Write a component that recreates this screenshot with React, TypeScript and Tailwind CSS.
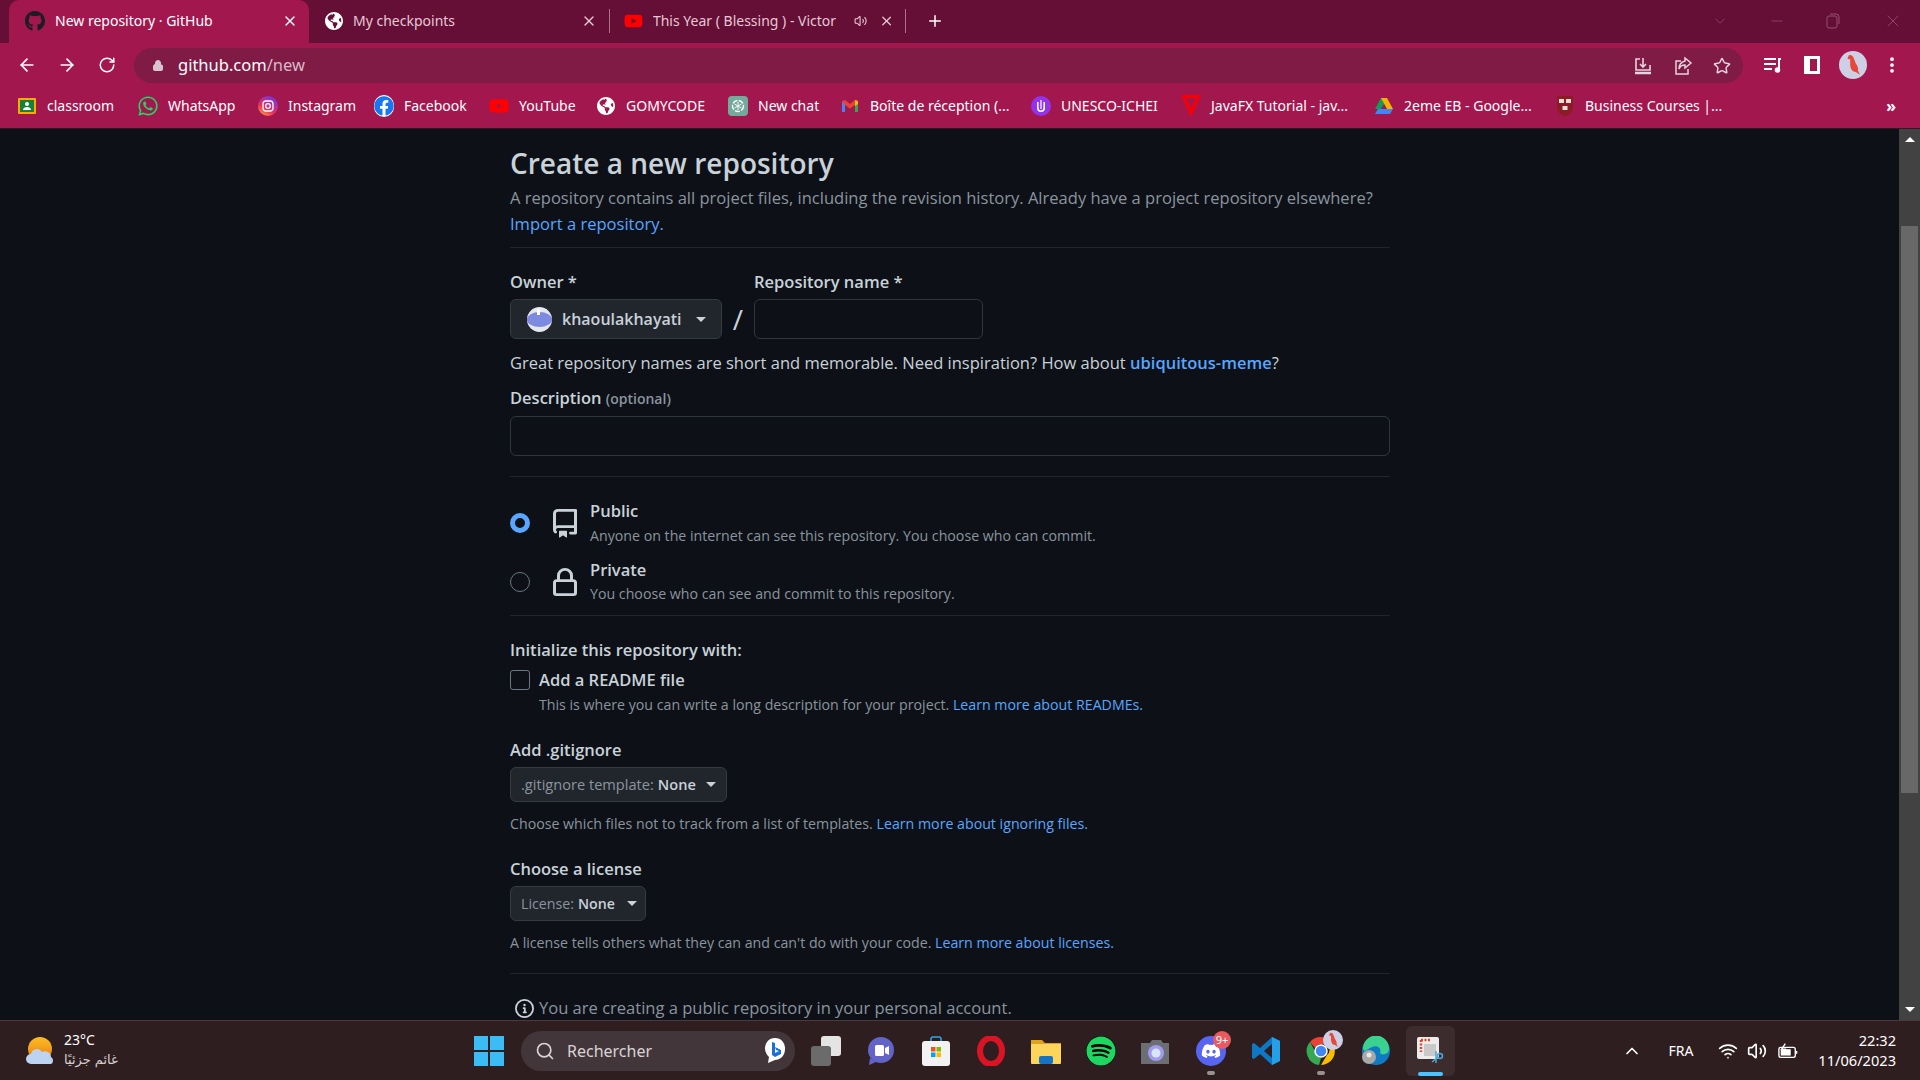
import { ArrowLeft, ArrowRight, RotateCw, Lock, Star, X, Plus, ChevronDown, Minus, MoreVertical, Search, ChevronUp, Volume2, Wifi } from "lucide-react";
import { FaGithub, FaWhatsapp, FaFacebook, FaYoutube, FaGlobeAmericas, FaDiscord, FaSpotify } from "react-icons/fa";

const bodyFont = "font-['Open_Sans','Noto_Sans',sans-serif]";

const Caret = ({ className = "" }: { className?: string }) => (
  <span className={`w-0 h-0 border-x-[5px] border-x-transparent border-t-[5px] border-t-[#c9d1d9] ${className}`} />
);

const Divider = ({ className = "" }: { className?: string }) => <div className={`h-px bg-[#21262d] ${className}`} />;

const Link = ({ children }: { children: React.ReactNode }) => <a className="text-[#58a6ff]">{children}</a>;

function RepoIcon() {
  return (
    <svg viewBox="2 0 12 16" preserveAspectRatio="none" fill="currentColor" className="w-6 h-[29px] ml-[23px] text-[#c9d1d9]">
      <path d="M2 2.5A2.5 2.5 0 0 1 4.5 0h8.75a.75.75 0 0 1 .75.75v12.5a.75.75 0 0 1-.75.75h-2.5a.75.75 0 0 1 0-1.5h1.75v-2h-8a1 1 0 0 0-.714 1.7.75.75 0 1 1-1.072 1.05A2.495 2.495 0 0 1 2 11.5Zm10.5-1h-8a1 1 0 0 0-1 1v6.708A2.486 2.486 0 0 1 4.5 9h8ZM5 12.25a.25.25 0 0 1 .25-.25h3.5a.25.25 0 0 1 .25.25v3.25a.25.25 0 0 1-.4.2l-1.45-1.087a.249.249 0 0 0-.3 0L5.4 15.7a.25.25 0 0 1-.4-.2Z" />
    </svg>
  );
}

function LockIcon() {
  return (
    <svg viewBox="2 0 12 15" preserveAspectRatio="none" fill="currentColor" className="w-6 h-[28px] ml-[23px] text-[#c9d1d9]">
      <path d="M4 4a4 4 0 0 1 8 0v2h.25c.966 0 1.75.784 1.75 1.75v5.5A1.75 1.75 0 0 1 12.25 15h-8.5A1.75 1.75 0 0 1 2 13.25v-5.5C2 6.784 2.784 6 3.75 6H4Zm8.25 3.5h-8.5a.25.25 0 0 0-.25.25v5.5c0 .138.112.25.25.25h8.5a.25.25 0 0 0 .25-.25v-5.5a.25.25 0 0 0-.25-.25ZM10.5 6V4a2.5 2.5 0 1 0-5 0v2Z" />
    </svg>
  );
}

function InfoIcon() {
  return (
    <svg viewBox="0 0 16 16" fill="currentColor" className="w-[19px] h-[19px] mr-[5px] text-[#c9d1d9]">
      <path d="M0 8a8 8 0 1 1 16 0A8 8 0 0 1 0 8Zm8-6.5a6.5 6.5 0 1 0 0 13 6.5 6.5 0 0 0 0-13ZM6.5 7.75A.75.75 0 0 1 7.25 7h1a.75.75 0 0 1 .75.75v2.75h.25a.75.75 0 0 1 0 1.5h-2a.75.75 0 0 1 0-1.5h.25v-2h-.25a.75.75 0 0 1-.75-.75ZM8 6a1 1 0 1 1 0-2 1 1 0 0 1 0 2Z" />
    </svg>
  );
}

function Bird() {
  return (
    <svg viewBox="0 0 20 20" className="w-full h-full">
      <circle cx="10" cy="10" r="10" fill="#cdd0e4" />
      <path d="M7 3c1.500-.5 3 .5 3.500 2l1.500 4c1.500 2 2 4 1.500 5l1.500 3-3-2c-2 0-4-2-4-5L8 6 6 5.500z" fill="#e8483a" />
    </svg>
  );
}

function Classroom() {
  return (
    <svg viewBox="0 0 20 20" className="w-5 h-5">
      <rect x="1" y="2" width="18" height="16" rx="1" fill="#f9ab00" />
      <rect x="3" y="4" width="14" height="12" fill="#188038" />
      <circle cx="10" cy="8" r="2" fill="#fff" />
      <path d="M6 14c0-2 2-3 4-3s4 1 4 3z" fill="#fff" />
    </svg>
  );
}

function Instagram() {
  return (
    <svg viewBox="0 0 20 20" className="w-5 h-5">
      <defs>
        <linearGradient id="ig" x1="0" y1="1" x2="0.6" y2="0">
          <stop offset="0" stopColor="#fdb73b" />
          <stop offset="0.45" stopColor="#e8305d" />
          <stop offset="1" stopColor="#7b35d6" />
        </linearGradient>
      </defs>
      <circle cx="10" cy="10" r="10" fill="url(#ig)" />
      <rect x="5" y="5" width="10" height="10" rx="3" fill="none" stroke="#fff" strokeWidth="1.3" />
      <circle cx="10" cy="10" r="2.3" fill="none" stroke="#fff" strokeWidth="1.3" />
    </svg>
  );
}

function OpenAiIcon() {
  return (
    <svg viewBox="0 0 20 20" className="w-5 h-5">
      <rect width="20" height="20" rx="4" fill="#74aa9c" />
      <circle cx="10" cy="10" r="5.5" fill="none" stroke="#fff" strokeWidth="1.4" strokeDasharray="5 1.5" />
      <path d="M10 6v8M6.5 8l7 4M13.5 8l-7 4" stroke="#fff" strokeWidth="0.9" />
    </svg>
  );
}

function Gmail() {
  return (
    <svg viewBox="0 0 20 20" className="w-5 h-5">
      <path d="M2 5v11h3V8z" fill="#4285f4" />
      <path d="M18 5v11h-3V8z" fill="#34a853" />
      <path d="M2 5l3-1 5 4 5-4 3 1-3 4-5 3.5L5 9z" fill="#ea4335" />
      <path d="M15 4l3 1v3l-3 2z" fill="#fbbc04" />
    </svg>
  );
}

function Unesco() {
  return (
    <svg viewBox="0 0 20 20" className="w-5 h-5">
      <circle cx="10" cy="10" r="10" fill="#9333ea" />
      <path d="M6.8 6v6a3.2 3.2 0 0 0 6.4 0V6" fill="none" stroke="#fff" strokeWidth="1.6" />
      <path d="M10 4v9" stroke="#fff" strokeWidth="1.2" />
    </svg>
  );
}

function JavaFx() {
  return (
    <svg viewBox="0 0 20 22" className="w-5 h-[22px]">
      <path d="M0 0h20L10 22z" fill="#f40009" />
      <path d="M5 3h10l-5 10z" fill="#a3174f" />
    </svg>
  );
}

function Drive() {
  return (
    <svg viewBox="0 0 20 20" className="w-5 h-5">
      <path d="M7 2h6l-3 6-3 5H1z" fill="#0f9d58" />
      <path d="M13 2l6 11h-6L7 2z" fill="#f4b400" />
      <path d="M4 13h15l-3 5H1z" fill="#4285f4" />
    </svg>
  );
}

function Harvard() {
  return (
    <svg viewBox="0 0 20 22" className="w-5 h-[22px]">
      <path d="M2 1h16v11c0 5-4 8-8 9.500C6 20 2 17 2 12z" fill="#8c1c24" />
      <rect x="4" y="4" width="5" height="4" fill="#e8e0d8" />
      <rect x="11" y="4" width="5" height="4" fill="#e8e0d8" />
      <rect x="7.500" y="11" width="5" height="4" fill="#e8e0d8" />
    </svg>
  );
}

const bookmarks = [
  { label: "classroom", icon: <Classroom />, width: "w-[138px] pl-[17px]" },
  { label: "WhatsApp", icon: <FaWhatsapp className="w-5 h-[22px] text-[#25d366]" />, width: "w-[120px]" },
  { label: "Instagram", icon: <Instagram />, width: "w-[116px]" },
  { label: "Facebook", icon: <FaFacebook className="w-5 h-[22px] text-[#1877f2] bg-white rounded-full" />, width: "w-[115px]" },
  { label: "YouTube", icon: <FaYoutube className="w-5 h-5 text-[#f00]" />, width: "w-[107px]" },
  { label: "GOMYCODE", icon: <FaGlobeAmericas className="w-[18px] h-5 text-white" />, width: "w-[132px]" },
  { label: "New chat", icon: <OpenAiIcon />, width: "w-[112px]" },
  { label: "Boîte de réception (...", icon: <Gmail />, width: "w-[191px]" },
  { label: "UNESCO-ICHEI", icon: <Unesco />, width: "w-[150px]" },
  { label: "JavaFX Tutorial - jav...", icon: <JavaFx />, width: "w-[193px]" },
  { label: "2eme EB - Google...", icon: <Drive />, width: "w-[181px]" },
  { label: "Business Courses |...", icon: <Harvard />, width: "w-[170px]" },
];

function TabStrip() {
  return (
    <div className="h-[43px] bg-[#650e36] flex pl-[9px] text-[14px] text-white shrink-0">
      <div className="w-[300px] bg-[#a3174f] rounded-t-[10px] flex items-center pl-4 pr-2 pb-[2px]">
        <FaGithub className="w-5 h-[22px] text-[#1c1c24]" />
        <span className="ml-2.5 flex-1">New repository · GitHub</span>
        <X className="w-4 h-4 mr-[3px]" />
      </div>
      <div className="w-[300px] flex items-center pl-4 pr-3 pb-[2px] text-[#e6c8d4]">
        <FaGlobeAmericas className="w-[18px] h-5 text-white" />
        <span className="ml-2.5 flex-1">My checkpoints</span>
        <X className="w-4 h-4" />
      </div>
      <div className="w-[309px] flex items-center pl-[14px] pr-3 pb-[2px] text-[#e6c8d4]">
        <div className="w-px h-6 bg-[#a9718a] -ml-[14px] mr-[14px]" />
        <FaYoutube className="w-5 h-5 text-[#f00]" />
        <span className="ml-2.5 w-[197px] overflow-hidden whitespace-nowrap">This Year ( Blessing ) - Victor</span>
        <Volume2 className="w-[14px] h-[14px] ml-[14px]" />
        <X className="w-4 h-4 ml-[12px]" />
        <div className="w-px h-6 bg-[#a9718a] ml-[11px]" />
      </div>
      <Plus className="w-[18px] h-[18px] self-center ml-[8px] mb-[2px]" />
      <div className="flex-1 flex items-center justify-end pb-[2px] text-[#93506f]">
        <ChevronDown className="w-[18px] h-[18px] mr-[39px]" strokeWidth={1} />
        <Minus className="w-[18px] h-[18px] mr-[40px]" strokeWidth={1} />
        <svg viewBox="0 0 14 16" fill="none" stroke="currentColor" className="w-[14px] h-4 mr-[43px]">
          <rect x="1" y="3" width="10" height="12" rx="2" />
          <path d="M4 1h6a3 3 0 0 1 3 3v7" />
        </svg>
        <X className="w-[20px] h-[20px] mr-[17px]" strokeWidth={1} />
      </div>
    </div>
  );
}

function Toolbar() {
  return (
    <div className="h-[43px] bg-[#a3174f] flex items-center text-white shrink-0">
      <div className="flex items-center gap-[20px] pl-[17px]">
        <ArrowLeft className="w-5 h-5" />
        <ArrowRight className="w-5 h-5" />
        <RotateCw className="w-[18px] h-[18px] ml-px" />
      </div>
      <div className="ml-[18px] w-[1609px] h-[35px] mt-[2px] rounded-full bg-[#801b45] flex items-center pl-[18px] pr-[12px]">
        <Lock className="w-3 h-[15px] text-[#d8c4ce]" fill="currentColor" />
        <span className="ml-[14px] text-[16.5px] flex-1">
          github.com<span className="text-[#d8b9c8]">/new</span>
        </span>
        <div className="flex items-center gap-[20px] text-[#e6d3dc]">
          <svg viewBox="0 0 20 20" fill="none" stroke="currentColor" strokeWidth="1.600" className="w-5 h-5 -ml-[2px]">
            <path d="M7 3H3v11h14V9M10 2v9M7 8l3 3 3-3" />
            <path d="M2 17h16" strokeWidth="2.500" />
          </svg>
          <svg viewBox="0 0 20 20" fill="none" stroke="currentColor" strokeWidth="1.500" className="w-5 h-5">
            <path d="M8 5H3v13h12v-5" />
            <path d="M12 2l6 5-6 5V9c-3 0-5 1-6 4 0-5 2-7 6-8z" />
          </svg>
          <Star className="w-[18px] h-[18px]" />
        </div>
      </div>
      <svg viewBox="0 0 20 20" fill="none" stroke="#fff" strokeWidth="2" className="w-5 h-5 ml-[20px]">
        <path d="M1 4h12M1 9h12M1 14h8" />
        <circle cx="14.500" cy="15" r="1.800" fill="#fff" />
        <path d="M16 15V4h2" />
      </svg>
      <div className="w-4 h-[18px] ml-[21px] border-[3px] border-l-[6px] border-white" />
      <div className="ml-[19px] w-7 h-7">
        <Bird />
      </div>
      <MoreVertical className="w-5 h-5 ml-[15px]" strokeWidth={2.500} />
    </div>
  );
}

function BookmarkBar() {
  return (
    <div className="h-[43px] pb-[3px] bg-[#a3174f] flex items-center text-white text-[14px] border-b border-[#3a1126] shrink-0">
      {bookmarks.map((b) => (
        <div key={b.label} className={`flex items-center shrink-0 ${b.width}`}>
          <span className="w-5 flex justify-center">{b.icon}</span>
          <span className="ml-2.5 whitespace-nowrap">{b.label}</span>
        </div>
      ))}
      <span className="ml-auto mr-[24px] text-[16px] font-bold">»</span>
    </div>
  );
}

function RepoForm() {
  return (
    <div className={`w-[880px] ml-[510px] pt-[16px] text-[#c9d1d9] text-[16.5px] ${bodyFont}`}>
      <h2 className="text-[28px] leading-[36px] font-semibold">Create a new repository</h2>
      <p className="mt-1 text-[16.55px] leading-[26px] text-[#8b949e] whitespace-nowrap">
        A repository contains all project files, including the revision history. Already have a project repository elsewhere?
      </p>
      <p className="text-[16.55px] leading-[26px]">
        <Link>Import a repository.</Link>
      </p>
      <Divider className="mt-[10px]" />

      <div className="mt-[22px] flex">
        <div className="w-[212px]">
          <div className="leading-6 font-semibold">Owner *</div>
          <div className="mt-[5px] h-10 bg-[#21262d] border border-[#363b42] rounded-md flex items-center pl-4">
            <span className="relative w-[25px] h-[25px] rounded-full bg-[#7c8be0] border-y-[5px] border-[#e6e6ee]">
              <span className="absolute left-[10px] -top-[3px] w-[3px] h-[6px] bg-white" />
            </span>
            <span className="ml-[10px] w-[134px] text-[16px] font-semibold">khaoulakhayati</span>
            <Caret />
          </div>
        </div>
        <div className="w-[32px] pt-[29px] flex justify-center text-[28px] leading-10 text-[#c9d1d9]">/</div>
        <div className="w-[229px]">
          <div className="leading-6 font-semibold whitespace-nowrap">Repository name *</div>
          <div className="mt-[5px] h-10 bg-[#0d1117] border border-[#30363d] rounded-md" />
        </div>
      </div>
      <p className="mt-3 leading-6 whitespace-nowrap">
        Great repository names are short and memorable. Need inspiration? How about{" "}
        <a className="text-[#58a6ff] font-semibold">ubiquitous-meme</a>?
      </p>
      <div className="mt-[11px] leading-6">
        <span className="font-semibold">Description</span> <span className="text-[14px] text-[#8b949e] font-semibold">(optional)</span>
      </div>
      <div className="mt-[5px] h-10 bg-[#0d1117] border border-[#30363d] rounded-md" />
      <Divider className="mt-5" />

      <div className="mt-[22px] flex items-center">
        <span className="w-5 h-5 rounded-full border-[5px] border-[#58a6ff] bg-[#0d1117]" />
        <RepoIcon />
        <div className="ml-[13px]">
          <div className="leading-6 font-semibold">Public</div>
          <div className="mt-[2px] leading-[22px] text-[14.2px] text-[#8b949e]">Anyone on the internet can see this repository. You choose who can commit.</div>
        </div>
      </div>
      <div className="mt-[11px] flex items-center">
        <span className="w-5 h-5 rounded-full border border-[#6e7681]" />
        <LockIcon />
        <div className="ml-[13px]">
          <div className="leading-6 font-semibold">Private</div>
          <div className="mt-px leading-[22px] text-[14.2px] text-[#8b949e]">You choose who can see and commit to this repository.</div>
        </div>
      </div>
      <Divider className="mt-[10px]" />

      <div className="mt-[22px] leading-6 font-semibold">Initialize this repository with:</div>
      <div className="mt-[6px] flex items-center">
        <span className="w-5 h-5 rounded-[3px] border border-[#6e7681]" />
        <span className="ml-[9px] leading-6 font-semibold">Add a README file</span>
      </div>
      <p className="mt-[2px] ml-[29px] leading-[22px] text-[14.2px] text-[#8b949e]">
        This is where you can write a long description for your project. <Link>Learn more about READMEs.</Link>
      </p>

      <div className="mt-[22px] leading-6 font-semibold">Add .gitignore</div>
      <div className="mt-[5px] w-[217px] h-[35px] bg-[#21262d] border border-[#363b42] rounded-md flex items-center pl-[10px] text-[14.6px]">
        <span className="text-[#8b949e]">.gitignore template:</span>
        <span className="ml-1 font-semibold w-[48px]">None</span>
        <Caret />
      </div>
      <p className="mt-[11px] leading-[22px] text-[14.2px] text-[#8b949e]">
        Choose which files not to track from a list of templates. <Link>Learn more about ignoring files.</Link>
      </p>

      <div className="mt-[22px] leading-6 font-semibold">Choose a license</div>
      <div className="mt-[5px] w-[136px] h-[35px] bg-[#21262d] border border-[#363b42] rounded-md flex items-center pl-[10px] text-[14.2px]">
        <span className="text-[#8b949e]">License:</span>
        <span className="ml-1 font-semibold w-[49px]">None</span>
        <Caret />
      </div>
      <p className="mt-[11px] leading-[22px] text-[14.2px] text-[#8b949e]">
        A license tells others what they can and can't do with your code. <Link>Learn more about licenses.</Link>
      </p>
      <Divider className="mt-[19px]" />
      <div className="mt-[22px] ml-[5px] flex items-center leading-6 text-[#8b949e] text-[16.55px]">
        <InfoIcon />
        You are creating a public repository in your personal account.
      </div>
    </div>
  );
}

function Scrollbar() {
  return (
    <div className="w-[21px] ml-auto bg-[#424242] flex flex-col items-center shrink-0 pt-[8px] pb-[8px]">
      <span className="w-0 h-0 border-x-[5px] border-x-transparent border-b-[5px] border-b-white" />
      <div className="w-[17px] h-[567px] mt-[84px] bg-[#686868]" />
      <span className="w-0 h-0 border-x-[5px] border-x-transparent border-t-[5px] border-t-white mt-auto" />
    </div>
  );
}

function TaskIcon({ children, dot, active }: { children: React.ReactNode; dot?: boolean; active?: boolean }) {
  return (
    <div className={`relative w-[49px] h-[50px] flex items-center justify-center rounded-md ${active ? "bg-[#3c2c2e]" : ""}`}>
      {children}
      {dot && <span className="absolute bottom-[1px] left-[21px] w-2 h-1 rounded-full bg-[#9a9194]" />}
      {active && <span className="absolute bottom-[0px] left-[12px] w-[25px] h-1 rounded-full bg-[#4cc2ff]" />}
    </div>
  );
}

function Taskbar() {
  return (
    <div className="h-[60px] bg-[#2f1e20] border-t border-[#4a3a3c] flex items-center text-white shrink-0 font-['Noto_Sans','DejaVu_Sans',sans-serif]">
      <svg viewBox="0 0 30 30" className="w-[30px] h-[30px] ml-[26px]">
        <defs>
          <linearGradient id="sun" x1="0" y1="0" x2="0" y2="1">
            <stop offset="0" stopColor="#fbbf24" />
            <stop offset="1" stopColor="#ea7a10" />
          </linearGradient>
        </defs>
        <circle cx="14" cy="13" r="12" fill="url(#sun)" />
        <path d="M5 28a5 5 0 0 1 0-10 6 6 0 0 1 11-2 6 6 0 0 1 9 5 4 4 0 0 1 0 7z" fill="#bcd4f2" />
      </svg>
      <div className="ml-[8px] w-[80px] pb-[2px] text-[14px] leading-[20px]">
        <div className="text-white">23°C</div>
        <div className="text-[#d5cfd0] text-[13px] font-['DejaVu_Sans',sans-serif] text-left" dir="ltr">غائم جزئيًا</div>
      </div>
      <svg viewBox="0 0 30 30" className="w-[30px] h-[30px] ml-[330px]">
        <path d="M0 0h14v14H0zM16 0h14v14H16zM0 16h14v14H0zM16 16h14v14H16z" fill="#3cbcf4" />
      </svg>
      <div className="ml-[17px] w-[274px] h-10 rounded-full bg-[#43363a] flex items-center pl-[14px] pr-[9px] text-[16px] text-[#d8d4d5]">
        <Search className="w-5 h-5" />
        <span className="ml-[12px] flex-1">Rechercher</span>
        <svg viewBox="0 0 22 28" className="w-[22px] h-7">
          <path d="M11 1a10 10 0 0 1 10 11c0 7-5 11-10 11l-7 3 1-6a12 12 0 0 1-4-8A10 10 0 0 1 11 1z" fill="#fff" />
          <path d="M8 5l3 1v10l4-2-3-1-1-3 6 3v4l-6 3-3-2z" fill="#1a6fd8" />
        </svg>
      </div>
      <div className="ml-[6px] flex items-center gap-[6px]">
        <TaskIcon>
          <div className="relative w-[30px] h-[30px]">
            <div className="absolute right-0 top-0 w-5 h-5 rounded-[3px] bg-[#e4e4e4]" />
            <div className="absolute left-0 bottom-0 w-5 h-5 rounded-[3px] bg-[#6b6b6b]" />
          </div>
        </TaskIcon>
        <TaskIcon>
          <svg viewBox="0 0 30 30" className="w-[30px] h-[30px]">
            <circle cx="15" cy="14" r="13" fill="#6264c8" />
            <path d="M4 22l-1 7 7-3z" fill="#6264c8" />
            <rect x="9" y="9" width="9" height="11" rx="1.500" fill="#fff" />
            <path d="M19 12l4-2v9l-4-2z" fill="#fff" />
          </svg>
        </TaskIcon>
        <TaskIcon>
          <svg viewBox="0 0 30 30" className="w-[30px] h-[30px]">
            <path d="M10 6V3a2 2 0 0 1 2-2h6a2 2 0 0 1 2 2v3" fill="none" stroke="#2fa8e0" strokeWidth="1.500" />
            <rect x="1" y="5" width="28" height="25" rx="3" fill="#f2f2f2" />
            <path d="M10 11h4.500v4.500H10z" fill="#f25022" />
            <path d="M15.500 11H20v4.500h-4.500z" fill="#7fba00" />
            <path d="M10 16.500h4.500V21H10z" fill="#00a4ef" />
            <path d="M15.500 16.500H20V21h-4.500z" fill="#ffb900" />
          </svg>
        </TaskIcon>
        <TaskIcon>
          <svg viewBox="0 0 30 30" className="w-[30px] h-[30px]">
            <ellipse cx="15" cy="15" rx="11" ry="13" fill="none" stroke="#d91525" strokeWidth="6" />
          </svg>
        </TaskIcon>
        <TaskIcon>
          <svg viewBox="0 0 30 30" className="w-[30px] h-[30px]">
            <path d="M0 4h11l3 3h16v5H0z" fill="#e0a21c" />
            <rect y="8" width="30" height="20" rx="1" fill="#fcd55a" />
            <rect x="8" y="20" width="14" height="8" rx="2" fill="#1673c5" />
          </svg>
        </TaskIcon>
        <TaskIcon>
          <span className="w-[30px] h-[30px] rounded-full bg-black flex items-center justify-center">
            <FaSpotify className="w-[30px] h-[30px] text-[#1ed760]" />
          </span>
        </TaskIcon>
        <TaskIcon>
          <svg viewBox="0 0 30 30" className="w-[30px] h-[30px]">
            <path d="M2 7h7l2-3h9l2 3h6v21H0V7z" fill="#6b6f73" />
            <circle cx="15" cy="17" r="8" fill="#a49af0" />
            <circle cx="15" cy="17" r="4.500" fill="#d6e8f8" />
          </svg>
        </TaskIcon>
        <TaskIcon dot>
          <span className="w-[30px] h-[30px] rounded-full bg-[#5865f2] flex items-center justify-center">
            <FaDiscord className="w-5 h-5 text-white" />
          </span>
          <span className="absolute top-[5px] right-[4px] w-[18px] h-[18px] rounded-full bg-[#e85a5f] text-[11px] leading-[18px] text-center">9+</span>
        </TaskIcon>
        <TaskIcon>
          <svg viewBox="0 0 30 30" className="w-[30px] h-[30px]">
            <path d="M21 1l8 4v20l-8 4-12-11-6 5-2-1V8l2-1 6 5z" fill="#0e78c5" />
            <path d="M21 8l-8 7 8 7z" fill="#2f1e20" />
            <path d="M21 1l8 4v20l-8 4z" fill="#25a0e8" />
          </svg>
        </TaskIcon>
        <TaskIcon dot>
          <svg viewBox="0 0 30 30" className="w-[30px] h-[30px]">
            <path d="M15 1a14 14 0 0 1 12 7H15a7 7 0 0 0-6 4L4 6a14 14 0 0 1 11-5z" fill="#ea4335" />
            <path d="M27 8a14 14 0 0 1-12 21l6-10a7 7 0 0 0 0-11z" fill="#fbbc04" />
            <path d="M4 6l6 11a7 7 0 0 0 5 5l-2 7A14 14 0 0 1 4 6z" fill="#34a853" />
            <circle cx="15" cy="15" r="6" fill="#4285f4" stroke="#fff" strokeWidth="1.500" />
          </svg>
          <span className="absolute top-[4px] right-[2px] w-5 h-5">
            <Bird />
          </span>
        </TaskIcon>
        <TaskIcon>
          <svg viewBox="0 0 30 30" className="w-[30px] h-[30px]">
            <circle cx="15" cy="15" r="14" fill="#0f7bc4" />
            <path d="M2 13a13 13 0 0 1 26-1c1 6-7 8-9 5 2-6-4-8-8-6-5 2-7 6-9 2z" fill="#3bd28f" />
            <circle cx="8" cy="21" r="7" fill="#a8a8a8" />
            <circle cx="8" cy="19" r="2.500" fill="#e8e8e8" />
          </svg>
        </TaskIcon>
        <TaskIcon active>
          <svg viewBox="0 0 30 30" className="w-[30px] h-[34px]">
            <rect x="1" y="1" width="22" height="22" rx="2" fill="#ececec" />
            <path d="M5 4h10M5 4v12" stroke="#d9492c" strokeWidth="2.500" strokeDasharray="2 1.500" />
            <rect x="8" y="8" width="12" height="12" fill="#c9c9c9" />
            <circle cx="24" cy="20" r="2.500" fill="none" stroke="#4aa8d8" strokeWidth="1.500" />
            <path d="M16 26l6-5M20 15v12" stroke="#4aa8d8" strokeWidth="1.500" />
          </svg>
        </TaskIcon>
      </div>
      <div className="flex-1 flex items-center justify-end pr-[24px]">
        <ChevronUp className="w-5 h-5 mr-[26px]" />
        <span className="text-[14px] mr-[25px]">FRA</span>
        <Wifi className="w-5 h-5 mr-[9px]" />
        <Volume2 className="w-5 h-5 mr-[11px]" />
        <svg viewBox="0 0 22 16" fill="none" stroke="#fff" strokeWidth="1.500" className="w-[20px] h-[18px]">
          <rect x="1" y="4" width="18" height="11" rx="2" />
          <rect x="3" y="6" width="11" height="7" fill="#fff" stroke="none" />
          <path d="M20.500 8v3M8 0L4 6h4l-2 5" />
        </svg>
        <div className="ml-[20px] pb-[2px] text-[14.6px] leading-[20px] text-right">
          <div>22:32</div>
          <div>11/06/2023</div>
        </div>
      </div>
    </div>
  );
}

export default function App() {
  return (
    <div className="w-[1920px] h-[1080px] flex flex-col overflow-hidden bg-[#0d1117] font-['Noto_Sans',sans-serif]">
      <TabStrip />
      <Toolbar />
      <BookmarkBar />
      <div className="flex-1 flex min-h-0 overflow-hidden">
        <RepoForm />
        <Scrollbar />
      </div>
      <Taskbar />
    </div>
  );
}
